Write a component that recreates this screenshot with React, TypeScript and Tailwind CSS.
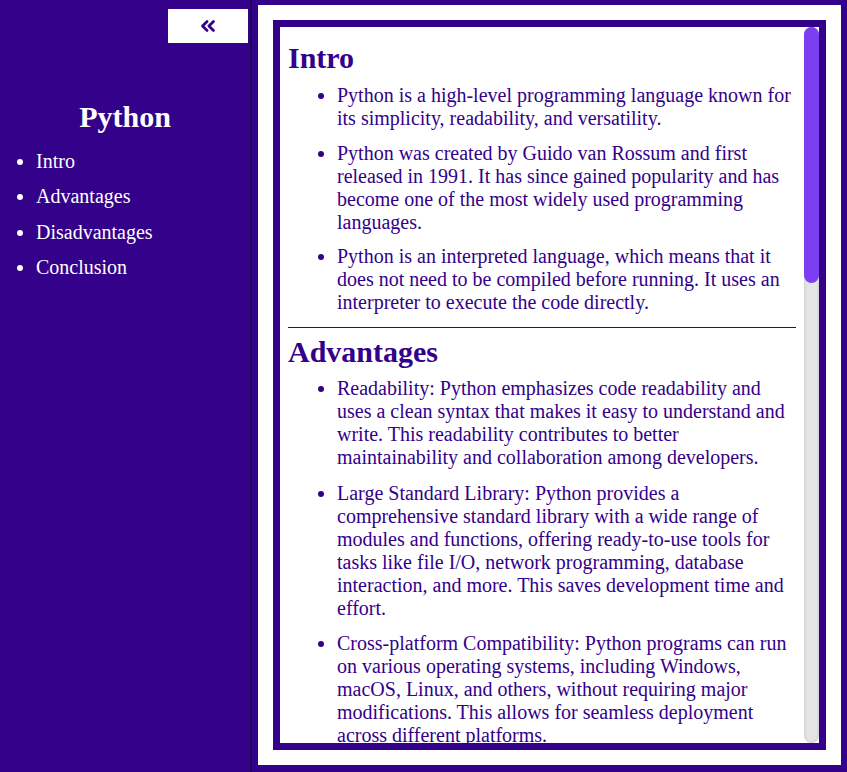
import React from "react";
import { ChevronsLeft } from "lucide-react";

const sections: { title: string; items: string[] }[] = [
  {
    title: "Intro",
    items: [
      "Python is a high-level programming language known for its simplicity, readability, and versatility.",
      "Python was created by Guido van Rossum and first released in 1991. It has since gained popularity and has become one of the most widely used programming languages.",
      "Python is an interpreted language, which means that it does not need to be compiled before running. It uses an interpreter to execute the code directly.",
    ],
  },
  {
    title: "Advantages",
    items: [
      "Readability: Python emphasizes code readability and uses a clean syntax that makes it easy to understand and write. This readability contributes to better maintainability and collaboration among developers.",
      "Large Standard Library: Python provides a comprehensive standard library with a wide range of modules and functions, offering ready-to-use tools for tasks like file I/O, network programming, database interaction, and more. This saves development time and effort.",
      "Cross-platform Compatibility: Python programs can run on various operating systems, including Windows, macOS, Linux, and others, without requiring major modifications. This allows for seamless deployment across different platforms.",
      "Extensive Third-Party Libraries: Python has a vast ecosystem of third-party libraries and frameworks, such as NumPy, Pandas, Django, and Flask, which extend its capabilities for various domains.",
    ],
  },
  {
    title: "Disadvantages",
    items: [
      "Performance: Python is an interpreted language, which can make it slower than compiled languages like C or C++ for certain computationally intensive tasks.",
      "Global Interpreter Lock (GIL): The GIL in CPython limits the execution of multiple threads at once, which can affect the performance of multi-threaded programs.",
    ],
  },
];

export default function App() {
  const serif = { fontFamily: '"Liberation Serif", "Times New Roman", serif' };
  return (
    <div
      className="flex h-[772px] w-[847px] overflow-hidden bg-[#33018a]"
      style={serif}
    >
      <aside className="flex w-[252px] shrink-0 flex-col border-r-2 border-[#1d0657] text-white">
        <div className="flex justify-end pt-[9px] pr-[2px]">
          <button className="flex h-[34px] w-[80px] items-center justify-center bg-white text-[#33018a]">
            <ChevronsLeft size={22} strokeWidth={3} />
          </button>
        </div>
        <h1 className="mt-[56px] text-center text-[30px] font-bold leading-[35px]">Python</h1>
        <ul className="mt-[16px] list-disc pl-[36px] text-[20px] leading-[23px]">
          {["Intro", "Advantages", "Disadvantages", "Conclusion"].map((s) => (
            <li key={s} className="mb-[12.3px]">
              {s}
            </li>
          ))}
        </ul>
      </aside>
      <main className="flex-1 px-[6px] pt-[5px]">
        <div className="h-[760px] bg-white p-[15px]">
          <div className="flex h-full border-[7px] border-[#33018a] bg-white">
            <div className="min-w-0 flex-1 overflow-hidden pl-[8px] pr-[8px] text-[#33018a]">
              {sections.map((sec, i) => (
                <section key={sec.title}>
                  {i > 0 && <hr className="mt-[13px] border-t border-[#33018a]" />}
                  <h2
                    className={`${i === 0 ? "mt-[13px]" : "mt-[6px]"} text-[30px] font-bold leading-[35px]`}
                  >
                    {sec.title}
                  </h2>
                  <ul className={`${i === 0 ? "mt-[9px]" : "mt-[8px]"} list-disc pl-[49px] text-[20px] leading-[23px]`}>
                    {sec.items.map((it, j) => (
                      <li
                        key={j}
                        className={j < sec.items.length - 1 ? (i === 0 ? "mb-[11.5px]" : "mb-[12.5px]") : ""}
                      >
                        {it}
                      </li>
                    ))}
                  </ul>
                </section>
              ))}
            </div>
            <div className="flex w-[15px] shrink-0 flex-col rounded-full bg-[#e4e4e4] shadow-[inset_0_0_3px_rgba(0,0,0,0.18)]">
              <div className="h-[256px] rounded-full bg-[#7b3ef0]" />
            </div>
          </div>
        </div>
      </main>
    </div>
  );
}
